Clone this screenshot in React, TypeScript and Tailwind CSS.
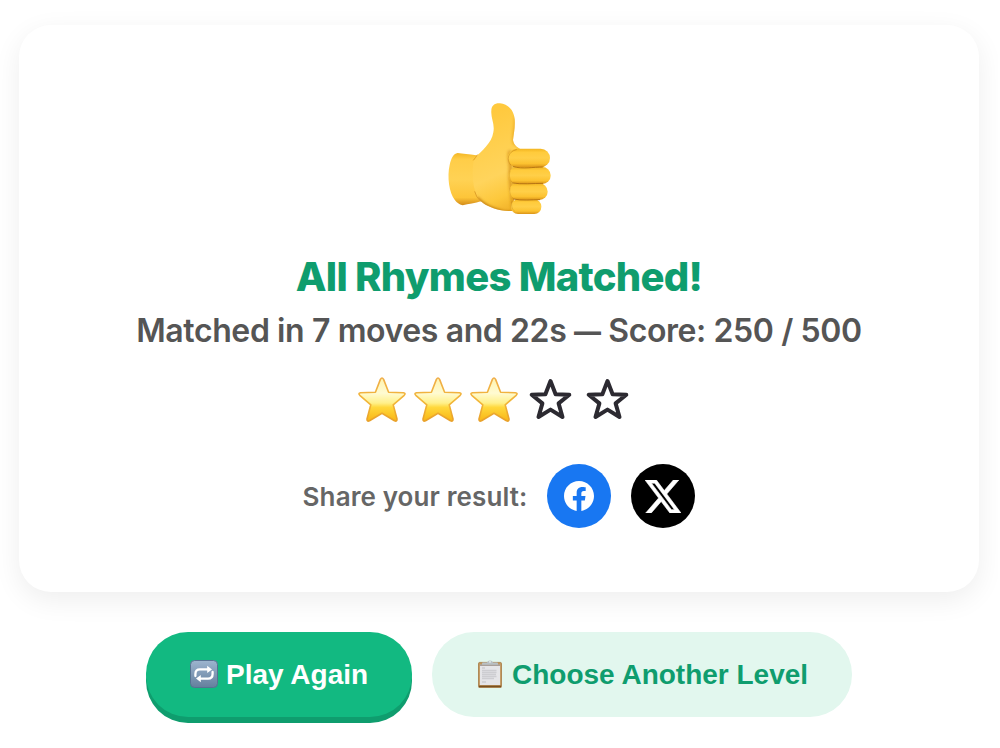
function ThumbsUp() {
  return (
    <svg viewBox="-3 0 420 420" className="h-[140px] w-[140px]" role="img" aria-label="Thumbs up">
      <defs>
        <linearGradient id="hand" gradientUnits="userSpaceOnUse" x1="130" y1="90" x2="250" y2="365">
          <stop offset="0" stopColor="#ffc93e" />
          <stop offset="0.35" stopColor="#ffd050" />
          <stop offset="0.6" stopColor="#ffd45c" />
          <stop offset="0.82" stopColor="#fdc83c" />
          <stop offset="1" stopColor="#efae26" />
        </linearGradient>
        <linearGradient id="wrist" x1="0" y1="0" x2="0" y2="1">
          <stop offset="0" stopColor="#f4b726" />
          <stop offset="0.12" stopColor="#ffcd48" />
          <stop offset="0.5" stopColor="#ffd254" />
          <stop offset="0.85" stopColor="#fdc539" />
          <stop offset="1" stopColor="#d28a18" />
        </linearGradient>
        <linearGradient id="finger" x1="0" y1="0" x2="0" y2="1">
          <stop offset="0" stopColor="#f2b520" />
          <stop offset="0.2" stopColor="#ffcb3c" />
          <stop offset="0.5" stopColor="#ffcf48" />
          <stop offset="0.8" stopColor="#fcc230" />
          <stop offset="1" stopColor="#da9318" />
        </linearGradient>
        <filter id="soft" x="-20%" y="-20%" width="140%" height="140%">
          <feGaussianBlur stdDeviation="5" />
        </filter>
        <clipPath id="palmClip">
          <path d="M184 62C184 47 194 39 210 40C234 42 252 61 254 88C256 111 251 133 249 150C251 165 262 174 280 181L258 220L250 362C216 367 179 353 160 340C152 334 147 330 142 322L126 210C148 190 184 160 190 127C195 101 182 85 184 62Z" />
        </clipPath>
      </defs>
      <path d="M83 189C99 192 116 192 139 196L155 333C134 340 116 341 98 346C87 344 81 338 75 331C57 308 51 260 59 225C63 207 69 191 83 189Z" fill="url(#wrist)" />
      <path d="M184 62C184 47 194 39 210 40C234 42 252 61 254 88C256 111 251 133 249 150C251 165 262 174 280 181L258 220L250 362C216 367 179 353 160 340C152 334 147 330 142 322C128 290 124 250 132 206C156 182 185 160 190 127C195 101 182 85 184 62Z" fill="url(#hand)" />
      <g clipPath="url(#palmClip)" fill="none" filter="url(#soft)">
        <path d="M258 80C259 111 248 136 252 158L284 180" stroke="#e8a51e" strokeWidth="8" />
        <path d="M241 182C232 205 245 220 241 240C238 270 244 291 246 323L250 365" stroke="#d9961f" strokeWidth="9" />
        <path d="M140 324C168 354 212 371 250 369" stroke="#b8700d" strokeWidth="9" />
      </g>
      <path d="M130 211Q138 202 142 194" stroke="#e3a01f" strokeWidth="3" fill="none" />
      <path d="M134 304Q138 322 152 334" stroke="#dfa02a" strokeWidth="3" fill="none" />
      <g fill="url(#finger)">
        <rect x="243" y="328" width="91" height="44" rx="21" />
        <rect x="237" y="280" width="116" height="50" rx="25" />
        <rect x="236" y="231" width="126" height="51" rx="25" />
        <rect x="233" y="176" width="127" height="56" rx="28" />
      </g>
      <g fill="none" stroke="#af6d12" strokeWidth="2.5" strokeLinecap="round">
        <path d="M250 230C278 238 311 231 337 231" />
        <path d="M248 279C274 284 311 280 338 280" />
        <path d="M250 327C276 333 305 329 329 329" />
        <path d="M259 179C232 185 229 210 242 225" strokeOpacity="0.5" />
        <path d="M240 244C235 260 241 272 246 276M240 294C237 310 243 321 248 324M246 334C242 350 248 360 253 363" strokeOpacity="0.35" />
      </g>
    </svg>
  );
}

function GoldStar() {
  return (
    <svg viewBox="0 0 56 56" className="h-14 w-14">
      <defs>
        <linearGradient id="gold" x1="0" y1="0" x2="0" y2="1">
          <stop offset="0" stopColor="#fff3ae" />
          <stop offset="0.35" stopColor="#fffbd2" />
          <stop offset="0.58" stopColor="#fff08a" />
          <stop offset="0.68" stopColor="#ffd83c" />
          <stop offset="1" stopColor="#f9b514" />
        </linearGradient>
        <linearGradient id="rim" x1="0" y1="0" x2="0" y2="1">
          <stop offset="0" stopColor="#efad48" />
          <stop offset="0.55" stopColor="#f2b638" />
          <stop offset="1" stopColor="#e8a02a" />
        </linearGradient>
      </defs>
      <path d="M26.4 7.4Q28 4.7 29.6 7.4L34.6 20.2L49.4 20.7Q52.2 21.1 50.2 23.3L39.2 32.8L43 47Q43.2 49.9 40.5 48.8L28 41.2L15.5 48.8Q12.8 49.9 13 47L16.8 32.8L5.8 23.3Q3.8 21.1 6.6 20.7L21.4 20.2Z" fill="url(#gold)" stroke="url(#rim)" strokeWidth="1.6" strokeLinejoin="round" />
    </svg>
  );
}

function EmptyStar() {
  return (
    <svg viewBox="0 0 57 56" className="h-14 w-[57px]">
      <path d="M28.5 9L33.6 22.2L47.3 22.8L36.6 31.4L40.5 45L28.5 37.6L16.5 45L20.4 31.4L9.7 22.8L23.4 22.2Z" fill="none" stroke="#2c2a31" strokeWidth="4" strokeLinejoin="round" />
    </svg>
  );
}

function FacebookIcon() {
  return (
    <svg viewBox="0 0 24 24" className="h-[30px] w-[30px] fill-white">
      <path d="M24 12.073c0-6.627-5.373-12-12-12s-12 5.373-12 12c0 5.99 4.388 10.954 10.125 11.854v-8.385H7.078v-3.47h3.047V9.43c0-3.007 1.792-4.669 4.533-4.669 1.312 0 2.686.235 2.686.235v2.953H15.83c-1.491 0-1.956.925-1.956 1.874v2.25h3.328l-.532 3.47h-2.796v8.385C19.612 23.027 24 18.062 24 12.073z" />
    </svg>
  );
}

function XIcon() {
  return (
    <svg viewBox="0 1.15 24 21.7" preserveAspectRatio="none" className="h-[33px] w-[36px] fill-white stroke-white">
      <path strokeWidth="0.4" d="M18.901 1.153h3.68l-8.04 9.19L24 22.846h-7.406l-5.8-7.584-6.638 7.584H.474l8.6-9.83L0 1.154h7.594l5.243 6.932ZM17.61 20.644h2.039L6.486 3.24H4.298Z" />
    </svg>
  );
}

function RepeatIcon() {
  return (
    <svg viewBox="0 0 28 28" className="h-7 w-7">
      <defs>
        <linearGradient id="key" x1="0" y1="0" x2="0" y2="1">
          <stop offset="0" stopColor="#9db5cf" />
          <stop offset="1" stopColor="#647f9d" />
        </linearGradient>
      </defs>
      <rect x="0.5" y="0.5" width="27" height="27" rx="4" fill="url(#key)" stroke="#567291" />
      <path d="M5.4 16V14Q5.4 9.4 10 9.4H18M22.6 12V14Q22.6 18.6 18 18.6H10" fill="none" stroke="#fff" strokeWidth="2.3" strokeLinecap="round" />
      <path d="M17.2 5.8L22 9.4L17.2 13ZM10.8 15L6 18.6L10.8 22.2Z" fill="#fff" />
    </svg>
  );
}

function ClipboardIcon() {
  return (
    <svg viewBox="0 0 24 28" className="h-7 w-6">
      <rect x="0.5" y="2.4" width="23" height="25.2" rx="1.2" fill="#c2965a" stroke="#a67a43" strokeWidth="0.8" />
      <rect x="1.9" y="4.5" width="20.2" height="20.6" fill="#e5e5e8" />
      <rect x="1.9" y="4.5" width="20.2" height="1.2" fill="#8f827a" />
      <path d="M4 8H7M4 10.5H18.5M4 12.5H18.5M4 14.5H18M4 16.5H18.5M4 18.5H16M4 22H8" stroke="#cdcdd1" strokeWidth="1.4" />
      <path d="M1 26.4H23" stroke="#795020" strokeWidth="1.6" />
      <path d="M4 4.8V3.4Q4 2.5 5 2.5H9Q9.6 0.4 12 0.4Q14.4 0.4 15 2.5H19Q20 2.5 20 3.4V4.8Z" fill="#b8c0c5" />
      <circle cx="12" cy="1.9" r="0.8" fill="#eef6f3" />
    </svg>
  );
}

export default function App() {
  return (
    <main className="flex h-[748px] w-[998px] flex-col items-center overflow-hidden bg-white pt-[25px]">
      <section className="flex h-[567px] w-[960px] flex-col items-center rounded-[32px] bg-white pt-[65px] font-['Inter',sans-serif] shadow-[0_8px_28px_rgba(0,0,0,0.07)]">
        <ThumbsUp />
        <h1 className="mt-[22px] text-[40px] leading-[50px] font-extrabold tracking-[-0.72px] whitespace-nowrap text-[#0f9d6e]">All Rhymes Matched!</h1>
        <p className="mt-[9px] text-[32px] leading-[40px] font-semibold tracking-[-0.4px] whitespace-nowrap text-[#555]">
          Matched in 7 moves and 22s <span className="align-[1px] text-[27px] leading-none font-extrabold">—</span> Score: 250 / 500
        </p>
        <div className="mt-[21px] mr-[8px] flex" role="img" aria-label="3 of 5 stars">
          <GoldStar />
          <GoldStar />
          <GoldStar />
          <EmptyStar />
          <EmptyStar />
        </div>
        <div className="mt-[36px] flex items-center gap-5">
          <span className="pt-[2px] text-[26px] leading-8 font-semibold tracking-[0.11px] whitespace-nowrap text-[#666]">Share your result:</span>
          <button aria-label="Share on Facebook" className="flex h-16 w-16 items-center justify-center rounded-full bg-[#1877f2]"><FacebookIcon /></button>
          <button aria-label="Share on X" className="flex h-16 w-16 items-center justify-center rounded-full bg-black"><XIcon /></button>
        </div>
      </section>
      <div className="mt-10 flex gap-5 font-['Liberation_Sans',sans-serif] text-[28px] font-bold whitespace-nowrap">
        <button className="flex h-[85px] w-[266px] items-center rounded-[42px] bg-[#12b981] pl-11 text-white shadow-[0_6px_0_#0f9d6e]">
          <span className="-mt-[2px]"><RepeatIcon /></span>
          <span className="ml-2">Play Again</span>
        </button>
        <button className="flex h-[85px] w-[420px] items-center rounded-[42px] bg-[#e2f7ee] pl-[46px] text-[#0f9d6e]">
          <span className="-mt-[2px]"><ClipboardIcon /></span>
          <span className="ml-[10px]">Choose Another Level</span>
        </button>
      </div>
    </main>
  );
}
